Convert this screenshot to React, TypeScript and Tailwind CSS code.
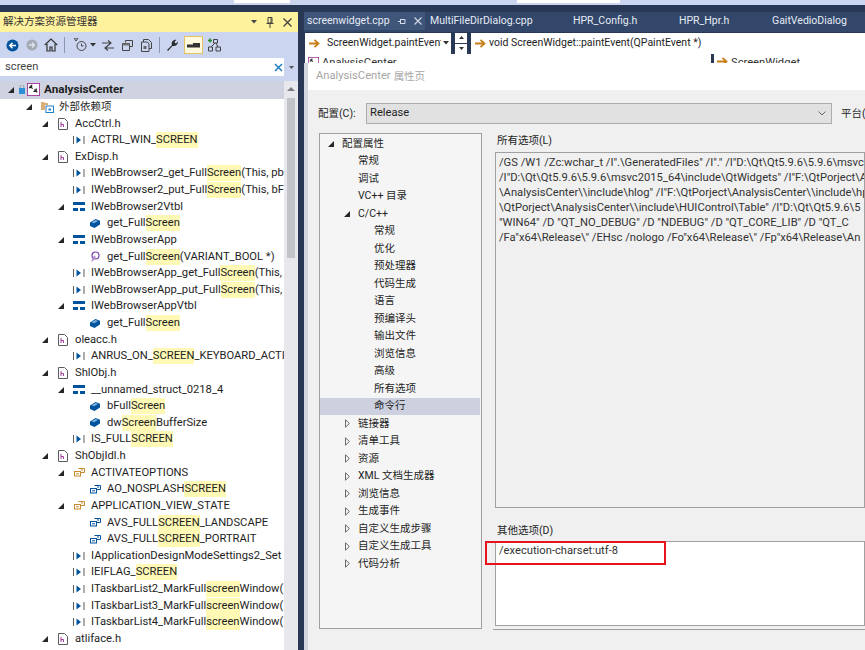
import React from "react";

const font = "font-['Roboto','Noto_Sans_CJK_SC',sans-serif]";

type Kind = "define" | "file" | "struct" | "field" | "method" | "enum" | "item" | "ref";

type Row = {
  level: number;
  open?: boolean;
  kind: Kind;
  pre: string;
  hit?: string;
  post?: string;
};

const rows: Row[] = [
  { level: 1, open: true, kind: "ref", pre: "外部依赖项" },
  { level: 2, open: true, kind: "file", pre: "AccCtrl.h" },
  { level: 3, kind: "define", pre: "ACTRL_WIN_", hit: "SCREEN" },
  { level: 2, open: true, kind: "file", pre: "ExDisp.h" },
  { level: 3, kind: "define", pre: "IWebBrowser2_get_Full", hit: "Screen", post: "(This, pb" },
  { level: 3, kind: "define", pre: "IWebBrowser2_put_Full", hit: "Screen", post: "(This, bF" },
  { level: 3, open: true, kind: "struct", pre: "IWebBrowser2Vtbl" },
  { level: 4, kind: "field", pre: "get_Full", hit: "Screen" },
  { level: 3, open: true, kind: "struct", pre: "IWebBrowserApp" },
  { level: 4, kind: "method", pre: "get_Full", hit: "Screen", post: "(VARIANT_BOOL *)" },
  { level: 3, kind: "define", pre: "IWebBrowserApp_get_Full", hit: "Screen", post: "(This," },
  { level: 3, kind: "define", pre: "IWebBrowserApp_put_Full", hit: "Screen", post: "(This," },
  { level: 3, open: true, kind: "struct", pre: "IWebBrowserAppVtbl" },
  { level: 4, kind: "field", pre: "get_Full", hit: "Screen" },
  { level: 2, open: true, kind: "file", pre: "oleacc.h" },
  { level: 3, kind: "define", pre: "ANRUS_ON_", hit: "SCREEN", post: "_KEYBOARD_ACTI" },
  { level: 2, open: true, kind: "file", pre: "ShlObj.h" },
  { level: 3, open: true, kind: "struct", pre: "__unnamed_struct_0218_4" },
  { level: 4, kind: "field", pre: "bFull", hit: "Screen" },
  { level: 4, kind: "field", pre: "dw", hit: "Screen", post: "BufferSize" },
  { level: 3, kind: "define", pre: "IS_FULL", hit: "SCREEN" },
  { level: 2, open: true, kind: "file", pre: "ShObjIdl.h" },
  { level: 3, open: true, kind: "enum", pre: "ACTIVATEOPTIONS" },
  { level: 4, kind: "item", pre: "AO_NOSPLASH", hit: "SCREEN" },
  { level: 3, open: true, kind: "enum", pre: "APPLICATION_VIEW_STATE" },
  { level: 4, kind: "item", pre: "AVS_FULL", hit: "SCREEN", post: "_LANDSCAPE" },
  { level: 4, kind: "item", pre: "AVS_FULL", hit: "SCREEN", post: "_PORTRAIT" },
  { level: 3, kind: "define", pre: "IApplicationDesignModeSettings2_Set" },
  { level: 3, kind: "define", pre: "IEIFLAG_", hit: "SCREEN" },
  { level: 3, kind: "define", pre: "ITaskbarList2_MarkFull", hit: "screen", post: "Window(" },
  { level: 3, kind: "define", pre: "ITaskbarList3_MarkFull", hit: "screen", post: "Window(" },
  { level: 3, kind: "define", pre: "ITaskbarList4_MarkFull", hit: "screen", post: "Window(" },
  { level: 2, open: true, kind: "file", pre: "atliface.h" },
];

const levelPad: Record<number, string> = {
  1: "pl-[19px]",
  2: "pl-[35px]",
  3: "pl-[51px]",
  4: "pl-[67px]",
};

const OpenArrow = () => (
  <svg width="6" height="6" viewBox="0 0 6 6">
    <path d="M6 0V6H0Z" fill="#262626" />
  </svg>
);

const ClosedArrow = () => (
  <svg width="5" height="9" viewBox="0 0 5 9">
    <path d="M.5.8 4.4 4.5.5 8.2Z" fill="none" stroke="#6a6a6a" />
  </svg>
);

const TreeIcon = ({ kind }: { kind: Kind }) => {
  if (kind === "define")
    return (
      <svg width="12" height="10" viewBox="0 0 12 10">
        <path d="M.5 1v8M11 1v8" stroke="#5c5c5c" />
        <path d="M3.5 1.5 8 5 3.5 8.5Z" fill="#00539c" />
      </svg>
    );
  if (kind === "file")
    return (
      <svg width="10" height="12" viewBox="0 0 10 12">
        <path d="M.5.5h6l3 3v8H.5Z" fill="#fff" stroke="#5c5c5c" />
        <path d="M3 4v5M3 6.500h2.500V9" fill="none" stroke="#a33b9e" />
      </svg>
    );
  if (kind === "struct")
    return (
      <svg width="12" height="10" viewBox="0 0 12 10">
        <path d="M0 0h12v3H0ZM0 6h5v3H0ZM7 6h5v3H7Z" fill="#00539c" />
      </svg>
    );
  if (kind === "field")
    return (
      <svg width="10" height="9" viewBox="0 0 10 9">
        <path d="M0 3.500 5.500 0 10 1.800V5.500L4.500 9 0 7Z" fill="#00539c" />
        <path d="M1.500 3.300 5.500 1 8 2 4 4.300Z" fill="#7fb2e0" />
      </svg>
    );
  if (kind === "method")
    return (
      <svg width="10" height="11" viewBox="0 0 10 11">
        <circle cx="5.500" cy="4.500" r="3.500" fill="none" stroke="#7a3fa8" strokeWidth="1.200" />
        <path d="M4 4.500 6 6 3 10 1 10.500Z" fill="#b48ad0" />
      </svg>
    );
  const color = kind === "enum" ? "#c98a2f" : "#00539c";
  if (kind === "enum" || kind === "item")
    return (
      <svg width="11" height="9" viewBox="0 0 11 9">
        <path d="M4.500.5h6v4h-4" fill="none" stroke={color} />
        <path d="M7 2h2" stroke={color} />
        <rect x=".5" y="3.500" width="6" height="4.500" fill="#fff" stroke={color} />
        <path d="M2 5.800h3" stroke={color} />
      </svg>
    );
  return (
    <svg width="13" height="12" viewBox="0 0 13 12">
      <path d="M0 1h3l1 1h3v2H4v5H0Z" fill="#dcae78" />
      <rect x="5" y="5" width="7.500" height="6.500" fill="#fff" stroke="#1f7fc4" />
      <rect x="7.500" y="7.500" width="2.500" height="2" fill="#1f7fc4" />
    </svg>
  );
};

const TreeRow = ({ row }: { row: Row }) => (
  <div className={`flex h-[16.64px] items-center whitespace-nowrap ${levelPad[row.level]}`}>
    <div className="flex w-[20px] shrink-0 justify-center">{row.open && <OpenArrow />}</div>
    <div className="flex w-[20px] shrink-0 justify-center pr-[4px]">
      <TreeIcon kind={row.kind} />
    </div>
    <span className={row.pre === "外部依赖项" ? "text-[10.5px] leading-[16px]" : "leading-[16px]"}>{row.pre}</span>
    {row.hit && <span className="bg-[#fff9b5] leading-[16px]">{row.hit}</span>}
    {row.post && <span className="leading-[16px]">{row.post}</span>}
  </div>
);

const SolutionToolbar = () => (
  <div className="flex h-[26px] items-center bg-[#ccd5f0] pl-[6px]">
    <svg className="mr-[7px]" width="13" height="13" viewBox="0 0 13 13">
      <circle cx="6.500" cy="6.500" r="6" fill="#00539c" />
      <path d="M10 6.500H4M6.500 3.800 3.800 6.500l2.700 2.700" fill="none" stroke="#fff" strokeWidth="1.500" />
    </svg>
    <svg className="mr-[6px]" width="12" height="12" viewBox="0 0 12 12">
      <circle cx="6" cy="6" r="5.500" fill="#a4a9b4" />
      <path d="M3 6h5.500M6 3.500 8.500 6 6 8.500" fill="none" stroke="#dfe3ec" strokeWidth="1.300" />
    </svg>
    <svg className="mr-[6px]" width="14" height="14" viewBox="0 0 14 14">
      <path d="M.8 7 7 1l6.200 6M3 6v7h3V9h2v4h3V6" fill="none" stroke="#333" strokeWidth="1.200" />
    </svg>
    <div className="mr-[9px] h-[16px] w-px bg-[#8d96ad]" />
    <svg className="mr-[3px]" width="13" height="14" viewBox="0 0 13 14">
      <circle cx="7.500" cy="8" r="4.500" fill="none" stroke="#444" />
      <path d="M7.500 5.500V8h2M0 0h4L2 3Z" fill="none" stroke="#444" />
    </svg>
    <svg className="mr-[6px]" width="6" height="4" viewBox="0 0 6 4">
      <path d="M0 0h6L3 3.500Z" fill="#333" />
    </svg>
    <svg className="mr-[8px]" width="12" height="11" viewBox="0 0 12 11">
      <path d="M0 3h9M6 .5 9 3 6 5.500M12 8H3M6 5.500 3 8l3 2.500" fill="none" stroke="#444" strokeWidth="1.200" />
    </svg>
    <svg className="mr-[8px]" width="11" height="11" viewBox="0 0 11 11">
      <path d="M3.500 2.500V.5h7v6H8M.5 3.500h7v7h-7Z" fill="none" stroke="#444" />
      <path d="M.5 3.500h7v2h-7Z" fill="#777" />
    </svg>
    <svg className="mr-[6px]" width="12" height="13" viewBox="0 0 12 13">
      <path d="M2.500 3V.5h5l3 3v6H8M.5 3h6l1.500 2v7.500H.5Z" fill="none" stroke="#444" />
      <path d="M2.500 7h3v3h-3Z" fill="#666" />
    </svg>
    <div className="mr-[6px] h-[16px] w-px bg-[#8d96ad]" />
    <svg className="mr-[6px]" width="12" height="12" viewBox="0 0 12 12">
      <path d="M1 11 6 6C5 3 7 .5 10.500.8L8.500 3l.5 1 1 .5L12 2.500C12 6 9 7.500 6.500 7L2 12Z" fill="#2b2b2b" />
    </svg>
    <div className="mr-[5px] flex h-[18px] w-[19px] items-center justify-center border border-[#e5c365] bg-[#fff9dd]">
      <svg width="13" height="5" viewBox="0 0 13 5">
        <path d="M0 1.500h13v3H0ZM6 0h7v1.500H6Z" fill="#333" />
      </svg>
    </div>
    <svg width="13" height="14" viewBox="0 0 13 14">
      <path d="M0 2.500h4M2 .5v4" stroke="#2a8a2a" strokeWidth="1.500" />
      <path d="M5.500 1.500h4v3.500h-4ZM.5 9h4v4h-4ZM8 9h4.500v4H8ZM7 5 3 9M8 5l2 4" fill="none" stroke="#444" />
    </svg>
  </div>
);

const SolutionPanel = () => (
  <div className="flex h-full w-[298px] shrink-0 flex-col overflow-hidden bg-white">
    <div className="flex h-[20px] shrink-0 items-center justify-between bg-[#fff29d] pl-[3px] pr-[6px] text-[10.5px] text-[#333]">
      <span>解决方案资源管理器</span>
      <div className="flex items-center gap-[9px]">
        <svg width="6" height="4" viewBox="0 0 6 4">
          <path d="M0 0h6L3 3.500Z" fill="#444" />
        </svg>
        <svg width="8" height="11" viewBox="0 0 8 11">
          <path d="M2 .5h4V6H2ZM.5 6.500h7M4 6.500V11M5 1v5" fill="none" stroke="#444" />
        </svg>
        <svg width="9" height="9" viewBox="0 0 9 9">
          <path d="M.5.5l8 8M8.500.5l-8 8" stroke="#444" strokeWidth="1.300" />
        </svg>
      </div>
    </div>
    <SolutionToolbar />
    <div className="flex h-[18px] shrink-0 bg-[#ccd5f0]">
      <div className="flex w-[284px] items-center justify-between bg-white pl-[5px] pr-[1px] text-[#444]">
        <span>screen</span>
        <svg width="9" height="9" viewBox="0 0 9 9">
          <path d="M1 1l7 7M8 1 1 8" stroke="#1f7fc4" strokeWidth="1.500" />
        </svg>
      </div>
      <div className="flex flex-1 items-center justify-center">
        <svg width="5" height="3" viewBox="0 0 5 3">
          <path d="M0 0h5L2.500 3Z" fill="#555" />
        </svg>
      </div>
    </div>
    <div className="h-[5px] shrink-0 bg-[#ccd5f0]" />
    <div className="flex min-h-0 flex-1">
      <div className="w-[284px] overflow-hidden text-[#1e1e1e]">
        <div className="flex h-[17.6px] items-center bg-[#cfd2e0] pl-[3px] whitespace-nowrap">
          <div className="flex w-[16px] justify-center">
            <OpenArrow />
          </div>
          <svg className="mr-[2px]" width="6" height="9" viewBox="0 0 6 9">
            <rect y="3" width="6" height="6" fill="#2d8fd5" />
            <path d="M1.200 3V1.500a1.800 1.800 0 0 1 3.600 0V3" fill="none" stroke="#8fa0b0" />
          </svg>
          <svg className="mr-[4px]" width="13" height="13" viewBox="0 0 14 14">
            <rect x=".5" y=".5" width="13" height="13" fill="#fff" stroke="#a33b9e" />
            <path d="M3 3l3 3M5 2v2M2 5h2M8 7l3 3M10 6v2M7 9h2" stroke="#222" strokeWidth="1.300" />
          </svg>
          <span className="text-[11.7px] font-bold">AnalysisCenter</span>
        </div>
        {rows.map((row, i) => (
          <TreeRow key={i} row={row} />
        ))}
      </div>
      <div className="flex w-[14px] flex-col items-center bg-[#e8e8ec] pt-[6px]">
        <svg width="8" height="4" viewBox="0 0 8 4">
          <path d="M4 0 8 4H0Z" fill="#7a7a80" />
        </svg>
        <div className="mt-[7px] h-[160px] w-[8px] bg-[#c2c3c9]" />
      </div>
    </div>
  </div>
);

const OrangeArrow = () => (
  <svg className="shrink-0" width="11" height="9" viewBox="0 0 11 9">
    <path d="M0 4.500h9M5.500.8 9.500 4.500 5.500 8.200" fill="none" stroke="#c77f18" strokeWidth="1.800" />
  </svg>
);

const EditorHeader = () => (
  <>
    <div className="flex h-[18px] shrink-0 items-center bg-[#32476a] text-[10.5px] text-[#e6ebf5]">
      <div className="flex h-full w-[121px] items-center justify-between bg-[#3f5579] pl-[3px] pr-[3px]">
        <span>screenwidget.cpp</span>
        <div className="flex items-center gap-[8px]">
          <svg width="8" height="7" viewBox="0 0 8 7">
            <path d="M0 3.500h2.500M2.500 1v5M2.500 1.500H7v4H2.500" fill="none" stroke="#d6dcea" />
          </svg>
          <svg width="8" height="8" viewBox="0 0 8 8">
            <path d="M.5.5l7 7M7.500.5l-7 7" stroke="#d6dcea" strokeWidth="1.100" />
          </svg>
        </div>
      </div>
      <span className="ml-[5px] w-[143px]">MultiFileDirDialog.cpp</span>
      <span className="w-[106px]">HPR_Config.h</span>
      <span className="w-[93px]">HPR_Hpr.h</span>
      <span>GaitVedioDialog</span>
    </div>
    <div className="h-[2px] shrink-0 bg-[#32476a]" />
    <div className="flex h-[22px] shrink-0 items-center pl-px text-[10.5px] text-[#1e1e1e]">
      <div className="flex h-[21px] w-[146px] shrink-0 items-center bg-white pl-[4px] pr-[2px]">
        <OrangeArrow />
        <span className="ml-[7px] w-[114px] overflow-hidden whitespace-nowrap">ScreenWidget.paintEvent</span>
        <svg className="ml-auto shrink-0" width="6" height="4" viewBox="0 0 6 4">
          <path d="M0 0h6L3 3.500Z" fill="#333" />
        </svg>
      </div>
      <div className="ml-[4px] flex h-[21px] w-[12px] shrink-0 flex-col">
        <div className="flex h-[10px] items-center justify-center bg-white">
          <svg width="5" height="3" viewBox="0 0 5 3">
            <path d="M2.500 0 5 3H0Z" fill="#333" />
          </svg>
        </div>
        <div className="mt-px flex h-[10px] items-center justify-center bg-white">
          <svg width="5" height="3" viewBox="0 0 5 3">
            <path d="M0 0h5L2.500 3Z" fill="#333" />
          </svg>
        </div>
      </div>
      <div className="ml-[4px] flex h-[21px] min-w-0 flex-1 items-center bg-white pl-[4px]">
        <OrangeArrow />
        <span className="ml-[3px] whitespace-nowrap">void ScreenWidget::paintEvent(QPaintEvent *)</span>
      </div>
    </div>
    <div className="flex h-[9px] shrink-0 overflow-hidden pl-px text-[#333]">
      <div className="flex w-[406px] shrink-0 items-start bg-white pl-[3px] pt-[3px]">
        <svg className="shrink-0" width="11" height="11" viewBox="0 0 14 14">
          <rect x=".5" y=".5" width="13" height="13" fill="#fff" stroke="#a33b9e" />
          <path d="M3 3l3 3M5 2v2M2 5h2" stroke="#222" strokeWidth="1.300" />
        </svg>
        <span className="ml-[3px] mt-[-1px] leading-[14px] whitespace-nowrap">AnalysisCenter</span>
      </div>
      <div className="ml-[3px] flex min-w-0 flex-1 items-start bg-white pl-[3px] pt-[3px]">
        <OrangeArrow />
        <span className="ml-[3px] mt-[-1px] leading-[14px] whitespace-nowrap">ScreenWidget</span>
      </div>
    </div>
  </>
);

type DialogRow = { label: string; pad: string; arrow?: "open" | "closed"; selected?: boolean };

const dialogRows: DialogRow[] = [
  { label: "配置属性", pad: "pl-[7px]", arrow: "open" },
  { label: "常规", pad: "pl-[38px]" },
  { label: "调试", pad: "pl-[38px]" },
  { label: "VC++ 目录", pad: "pl-[38px]" },
  { label: "C/C++", pad: "pl-[23px]", arrow: "open" },
  { label: "常规", pad: "pl-[54px]" },
  { label: "优化", pad: "pl-[54px]" },
  { label: "预处理器", pad: "pl-[54px]" },
  { label: "代码生成", pad: "pl-[54px]" },
  { label: "语言", pad: "pl-[54px]" },
  { label: "预编译头", pad: "pl-[54px]" },
  { label: "输出文件", pad: "pl-[54px]" },
  { label: "浏览信息", pad: "pl-[54px]" },
  { label: "高级", pad: "pl-[54px]" },
  { label: "所有选项", pad: "pl-[54px]" },
  { label: "命令行", pad: "pl-[54px]", selected: true },
  { label: "链接器", pad: "pl-[23px]", arrow: "closed" },
  { label: "清单工具", pad: "pl-[23px]", arrow: "closed" },
  { label: "资源", pad: "pl-[23px]", arrow: "closed" },
  { label: "XML 文档生成器", pad: "pl-[23px]", arrow: "closed" },
  { label: "浏览信息", pad: "pl-[23px]", arrow: "closed" },
  { label: "生成事件", pad: "pl-[23px]", arrow: "closed" },
  { label: "自定义生成步骤", pad: "pl-[23px]", arrow: "closed" },
  { label: "自定义生成工具", pad: "pl-[23px]", arrow: "closed" },
  { label: "代码分析", pad: "pl-[23px]", arrow: "closed" },
];

const optionLines = [
  '/GS /W1 /Zc:wchar_t /I".\\GeneratedFiles" /I"." /I"D:\\Qt\\Qt5.9.6\\5.9.6\\msvc',
  '/I"D:\\Qt\\Qt5.9.6\\5.9.6\\msvc2015_64\\include\\QtWidgets" /I"F:\\QtPorject\\A',
  '\\AnalysisCenter\\\\include\\hlog" /I"F:\\QtPorject\\AnalysisCenter\\\\include\\hp',
  '\\QtPorject\\AnalysisCenter\\\\include\\HUIControl\\Table" /I"D:\\Qt\\Qt5.9.6\\5',
  '"WIN64" /D "QT_NO_DEBUG" /D "NDEBUG" /D "QT_CORE_LIB" /D "QT_C',
  '/Fa"x64\\Release\\" /EHsc /nologo /Fo"x64\\Release\\" /Fp"x64\\Release\\An',
];

const PropertyDialog = () => (
  <div className="flex min-h-0 flex-1">
    <div className="w-[4px] shrink-0 bg-[#d3d6de]" />
    <div className="flex min-w-0 flex-1 flex-col bg-[#f0f0f0] text-[#1e1e1e]">
      <div className="flex h-[27px] shrink-0 items-center bg-white pl-[8px] text-[#a6a6a6]">
        AnalysisCenter <span className="ml-[3px] text-[10.5px]">属性页</span>
      </div>
      <div className="mt-[13px] flex h-[21px] shrink-0 items-center pl-[10px]">
        <span className="w-[48px] shrink-0 text-[10.5px]">配置(C):</span>
        <div className="flex h-[21px] w-[466px] shrink-0 items-center justify-between border border-[#adadad] bg-[#e1e1e1] pl-[3px] pr-[5px]">
          <span>Release</span>
          <svg width="8" height="5" viewBox="0 0 8 5">
            <path d="M.5.500 4 4 7.500.5" fill="none" stroke="#666" />
          </svg>
        </div>
        <span className="ml-[9px] whitespace-nowrap text-[10.5px]">平台(</span>
      </div>
      <div className="mt-[9px] flex min-h-0 flex-1 pl-[11px]">
        <div className="mb-[21px] w-[163px] shrink-0 border border-[#a0a0a0] bg-[#f5f5f5] pt-px text-[10.5px]">
          {dialogRows.map((r, i) => (
            <div
              key={i}
              className={`flex h-[17.5px] items-center whitespace-nowrap ${r.pad} ${r.selected ? "mr-px bg-[#cdd0df]" : ""}`}
            >
              {r.arrow && (
                <div className="mr-[7px] flex w-[8px] justify-center">
                  {r.arrow === "open" ? <OpenArrow /> : <ClosedArrow />}
                </div>
              )}
              <span>{r.label}</span>
            </div>
          ))}
        </div>
        <div className="relative ml-[13px] flex min-w-0 flex-1 flex-col">
          <div className="h-[19px] shrink-0 pl-[2px] text-[10.5px] leading-[15px]">所有选项(L)</div>
          <div className="h-[356px] shrink-0 overflow-hidden border border-[#a0a0a0] bg-[#f0f0f0] pl-[3px] pt-[2px] text-[#333]">
            {optionLines.map((line) => (
              <div key={line} className="h-[15px] whitespace-nowrap leading-[15px]">
                {line}
              </div>
            ))}
          </div>
          <div className="flex h-[33px] shrink-0 items-end pb-[2px] pl-[2px] text-[10.5px]">其他选项(D)</div>
          <div className="h-[85px] shrink-0 border border-[#a0a0a0] bg-white pl-[3px] pt-px text-[#333]">
            /execution-charset:utf-8
          </div>
          <div className="mt-[3px] ml-[-2px] h-px bg-[#a0a0a0]" />
          <div className="absolute left-[-10px] top-[408px] h-[24px] w-[181px] border-2 border-[#e8141c]" />
        </div>
      </div>
    </div>
  </div>
);

export default function App() {
  return (
    <div className={`flex h-[650px] w-[865px] flex-col overflow-hidden bg-[#293955] text-[11.2px] ${font}`}>
      <div className="flex h-[5px] shrink-0 bg-[#ccd5f0]">
        <div className="ml-[234px] h-[3px] w-[56px] bg-white" />
        <div className="ml-[227px] h-[3px] w-[103px] bg-white" />
      </div>
      <div className="h-[7px] shrink-0" />
      <div className="flex min-h-0 flex-1">
        <SolutionPanel />
        <div className="flex min-w-0 flex-1 flex-col pl-[6px]">
          <EditorHeader />
          <PropertyDialog />
        </div>
      </div>
    </div>
  );
}
